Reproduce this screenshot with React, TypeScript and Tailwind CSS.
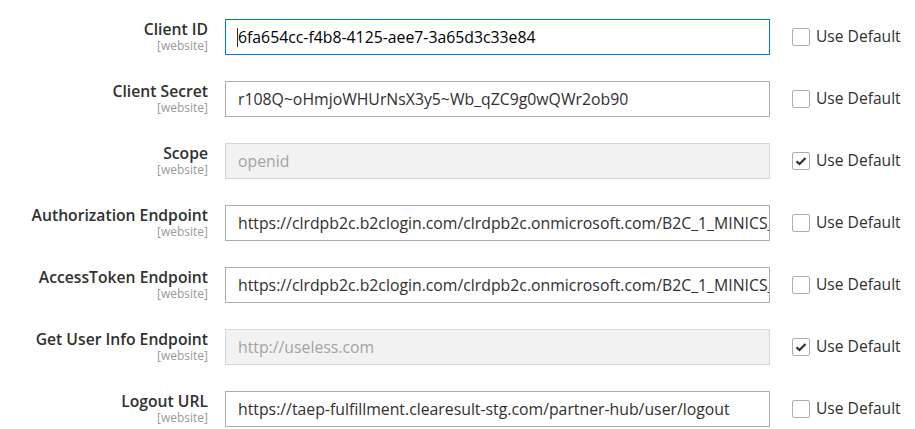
import React from "react";

type Field = {
  label: string;
  value: string;
  disabled?: boolean;
  focused?: boolean;
};

const fields: Field[] = [
  { label: "Client ID", value: "6fa654cc-f4b8-4125-aee7-3a65d3c33e84", focused: true },
  { label: "Client Secret", value: "r108Q~oHmjoWHUrNsX3y5~Wb_qZC9g0wQWr2ob90" },
  { label: "Scope", value: "openid", disabled: true },
  {
    label: "Authorization Endpoint",
    value: "https://clrdpb2c.b2clogin.com/clrdpb2c.onmicrosoft.com/B2C_1_MINICS_SIGNIN/oauth2/v2.0/authorize",
  },
  {
    label: "AccessToken Endpoint",
    value: "https://clrdpb2c.b2clogin.com/clrdpb2c.onmicrosoft.com/B2C_1_MINICS_SIGNIN/oauth2/v2.0/token",
  },
  { label: "Get User Info Endpoint", value: "http://useless.com", disabled: true },
  { label: "Logout URL", value: "https://taep-fulfillment.clearesult-stg.com/partner-hub/user/logout" },
];

const FieldRow: React.FC<{ field: Field }> = ({ field }) => {
  const border = field.focused
    ? "border-[#007bdb]"
    : field.disabled
    ? "border-[#d6d6d6] bg-[#f2f2f2] text-[#a3a3a3]"
    : "border-[#adadad] bg-white text-[#303030]";

  return (
    <div className="flex items-start">
      <div className="w-[208px] shrink-0 pt-px text-right">
        <div className="text-[15.7px] leading-[18px] font-semibold text-[#303030]">{field.label}</div>
        <div className="mt-px text-[12px] leading-[14px] text-[#999999]">[website]</div>
      </div>
      <div className="relative ml-[17px] shrink-0">
        <input
          readOnly
          disabled={field.disabled}
          value={field.value}
          className={`block h-[36px] w-[545px] border pl-3 pr-0 text-[15.8px] outline-none ${border}`}
          style={{ fontFamily: '"Open Sans", sans-serif' }}
        />
        {field.focused && (
          <span className="pointer-events-none absolute left-[12px] top-[9px] h-[19px] w-px bg-[#303030]" />
        )}
      </div>
      <div className="ml-[22px] flex h-[36px] items-center gap-[6px]">
        <span className="flex h-[18px] w-[18px] items-center justify-center rounded-[2px] border border-[#adadad] bg-white">
          {field.disabled && (
            <svg width="12" height="10" viewBox="0 0 12 10">
              <path d="M1.5 5.2 L4.5 8 L10.5 2" fill="none" stroke="#303030" strokeWidth="2.2" />
            </svg>
          )}
        </span>
        <span className="whitespace-nowrap text-[15.6px] text-[#303030]">Use Default</span>
      </div>
    </div>
  );
};

export default function App() {
  return (
    <div
      className="h-[429px] w-[915px] overflow-hidden bg-white pt-[19px]"
      style={{ fontFamily: '"Open Sans", sans-serif' }}
    >
      <div className="flex flex-col gap-[26px]">
        {fields.map((f) => (
          <FieldRow key={f.label} field={f} />
        ))}
      </div>
    </div>
  );
}
